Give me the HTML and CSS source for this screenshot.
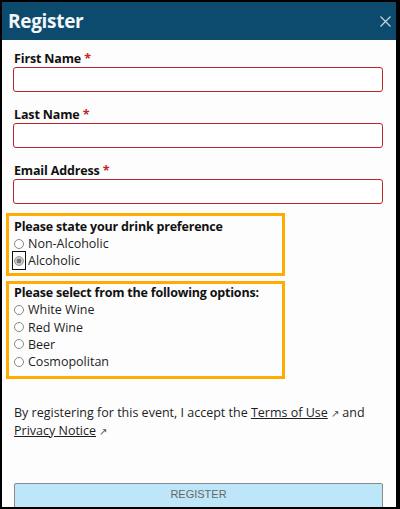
FILE: index.html
```html
<!DOCTYPE html>
<html>
<head>
<meta charset="utf-8">
<link rel="stylesheet" href="styles.css">
</head>
<body>
<div class="dialog">
  <div class="header">
    <h1 class="title">Register</h1>
    <button class="close" aria-label="Close">
      <svg width="11" height="11" viewBox="0 0 11 11"><path d="M0.5 0.5 L10.5 10.5 M10.5 0.5 L0.5 10.5" stroke="#c9d3dc" stroke-width="1.2" fill="none"/></svg>
    </button>
  </div>
  <form class="form">
    <div class="field first">
      <label class="label">First Name <span class="req">*</span></label>
      <input class="input" type="text">
    </div>
    <div class="field">
      <label class="label">Last Name <span class="req">*</span></label>
      <input class="input" type="text">
    </div>
    <div class="field">
      <label class="label">Email Address <span class="req">*</span></label>
      <input class="input" type="text">
    </div>
    <div class="group g1">
      <div class="legend">Please state your drink preference</div>
      <label class="opt"><span class="radio-wrap"><input type="radio" name="drink" class="radio"></span>Non-Alcoholic</label>
      <label class="opt"><span class="radio-wrap focus"><input type="radio" name="drink" class="radio" checked></span>Alcoholic</label>
    </div>
    <div class="group g2">
      <div class="legend">Please select from the following options:</div>
      <label class="opt"><span class="radio-wrap"><input type="radio" name="opt" class="radio"></span>White Wine</label>
      <label class="opt"><span class="radio-wrap"><input type="radio" name="opt" class="radio"></span>Red Wine</label>
      <label class="opt"><span class="radio-wrap"><input type="radio" name="opt" class="radio"></span>Beer</label>
      <label class="opt"><span class="radio-wrap"><input type="radio" name="opt" class="radio"></span>Cosmopolitan</label>
    </div>
    <p class="terms">By registering for this event, I accept the <a class="link" href="#">Terms of Use</a> <span class="ext">↗</span> and <a class="link" href="#">Privacy Notice</a> <span class="ext">↗</span></p>
    <button type="button" class="submit">REGISTER</button>
  </form>
</div>
</body>
</html>
```
FILE: styles.css
```css
* { box-sizing: border-box; }
html, body { margin: 0; padding: 0; }
body { background: #000; width: 400px; height: 509px; overflow: hidden; }
.dialog {
  width: 400px;
  height: 509px;
  border: 2px solid #000;
  border-right-width: 4px;
  background: #fdfdfd;
  overflow: hidden;
  font-family: "Open Sans", "Noto Sans", sans-serif;
  color: #1e1e1e;
}
.header {
  height: 38px;
  background: #0c4a6e;
  display: flex;
  align-items: center;
  justify-content: space-between;
  padding: 0 4px 0 6px;
}
.title {
  margin: 0;
  font-size: 19px;
  font-weight: 700;
  color: #f4f6f8;
  letter-spacing: -0.3px;
}
.close {
  background: none;
  border: 0;
  padding: 0;
  width: 11px;
  height: 11px;
  margin-right: 1px;
  display: flex;
}
.form {
  padding: 0 12px 0 4px;
}
.field { margin-left: 7px; margin-top: 14px; }
.field.first { margin-top: 10px; }
.label {
  display: block;
  font-size: 12.5px;
  font-weight: 700;
  line-height: 17px;
  padding-left: 1px;
  color: #111;
  letter-spacing: -0.15px;
}
.req { color: #c0282d; }
.input {
  display: block;
  width: 370px;
  height: 25px;
  border: 1.5px solid #b8252b;
  border-radius: 3px;
  background: #fff;
  margin: 0;
}
.group {
  border: 3px solid #ffab00;
  width: 279px;
  margin-left: 0;
  padding: 2px 0 4px 5px;
}
.g1 { margin-top: 9px; }
.g2 { margin-top: 5px; padding-top: 0; padding-bottom: 5px; }
.legend {
  font-size: 12.5px;
  font-weight: 700;
  line-height: 17px;
  color: #111;
  letter-spacing: -0.2px;
}
.opt {
  display: flex;
  align-items: center;
  height: 17px;
  font-size: 12.5px;
  color: #1e1e1e;
}
.g2 .opt { height: 17.4px; }
.radio-wrap {
  position: relative;
  display: inline-flex;
  align-items: center;
  width: 10px;
  height: 17px;
  margin-right: 4px;
}
.radio-wrap.focus::after {
  content: "";
  position: absolute;
  left: -2px;
  right: -2px;
  top: -1px;
  bottom: -1px;
  border: 1.5px solid #111;
}
.radio {
  appearance: none;
  -webkit-appearance: none;
  margin: 0;
  width: 10px;
  height: 10px;
  border: 1px solid #888;
  border-radius: 50%;
  background: #fff;
}
.radio:checked {
  background: radial-gradient(circle, #777 0 2.2px, #c8c8c8 2.6px 100%);
  border-color: #999;
}
.terms {
  margin: 25px 0 0 7px;
  font-size: 12.5px;
  line-height: 17px;
  color: #1e1e1e;
  padding-left: 1px;
}
.link { color: #1e1e1e; text-decoration: underline; }
.ext { font-size: 10px; color: #444; }
.submit {
  display: block;
  margin: 43px 0 0 8px;
  width: 369px;
  height: 30px;
  background: #bde6f8;
  border: 1px solid #8a8a8a;
  border-radius: 2px;
  font-family: "Liberation Sans", Arial, sans-serif;
  font-size: 11px;
  color: #666;
  padding: 0 0 8px;
}
```
